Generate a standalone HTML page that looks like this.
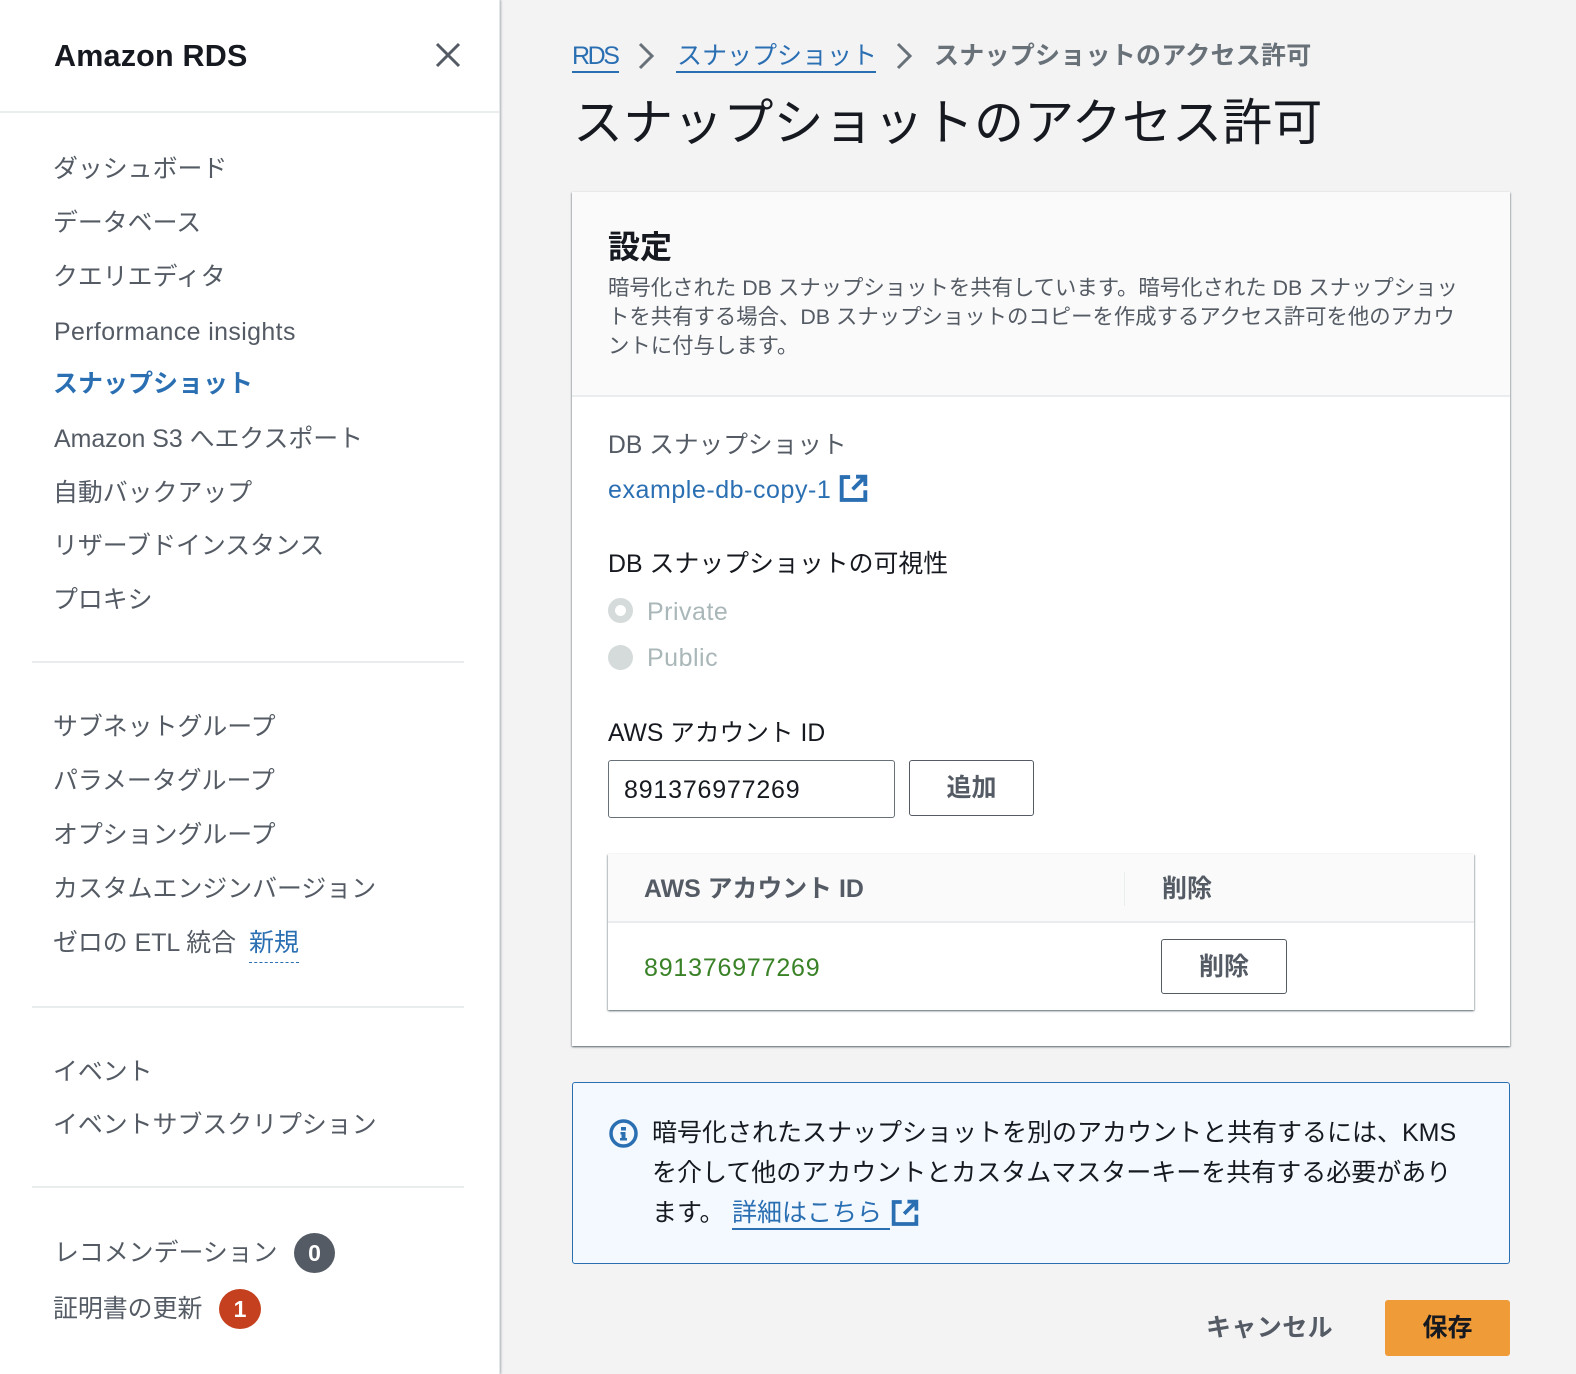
<!DOCTYPE html>
<html lang="ja"><head><meta charset="utf-8"><title>スナップショットのアクセス許可</title>
<style>
*{box-sizing:border-box}
html,body{margin:0;padding:0;width:1576px;height:1374px;overflow:hidden;background:#f3f3f4}
body{position:relative;font-family:"Liberation Sans","Noto Sans CJK JP",sans-serif;color:#16191f;font-size:25px}
.t{position:absolute;white-space:nowrap;height:40px;line-height:40px}
.n{color:#545b64;left:53px;font-size:24.9px}
.d{position:absolute;height:2px;background:#eaeded}
.b{font-weight:700}
.l{color:#2b6fb3}
.box{position:absolute}
svg{position:absolute;overflow:visible}
</style></head><body>
<div class="box" style="left:0;top:0;width:500px;height:1374px;background:#fff;border-right:1px solid #e4e7e7;box-shadow:1px 0 2px rgba(0,28,36,.3)"></div>
<div class="d" style="left:0;top:111px;width:499px"></div>
<div class="t b" style="left:54px;top:36px;font-size:30.500px;letter-spacing:.2px">Amazon RDS</div>
<svg style="left:435px;top:42px" width="26" height="26" viewBox="0 0 26 26"><path d="M2 2L24 24M24 2L2 24" stroke="#545b64" stroke-width="3" fill="none"/></svg>

<div class="t n" style="top:149px">ダッシュボード</div>
<div class="t n" style="top:203px">データベース</div>
<div class="t n" style="top:257px">クエリエディタ</div>
<div class="t n" style="top:312px;letter-spacing:.4px;left:54px">Performance insights</div>
<div class="t n b" style="top:364px;color:#2b6fb3;font-size:25px">スナップショット</div>
<div class="t n" style="top:419px;left:54px">Amazon S3 へエクスポート</div>
<div class="t n" style="top:473px">自動バックアップ</div>
<div class="t n" style="top:526px">リザーブドインスタンス</div>
<div class="t n" style="top:580px">プロキシ</div>
<div class="d" style="left:32px;top:661px;width:432px"></div>
<div class="t n" style="top:707px">サブネットグループ</div>
<div class="t n" style="top:761px">パラメータグループ</div>
<div class="t n" style="top:815px">オプショングループ</div>
<div class="t n" style="top:869px">カスタムエンジンバージョン</div>
<div class="t n" style="top:923px">ゼロの ETL 統合</div>
<div class="t l" style="left:249px;top:923px">新規</div>
<div class="box" style="left:249px;top:962px;width:50px;border-top:1px dashed #2b6fb3"></div>
<div class="d" style="left:32px;top:1006px;width:432px"></div>
<div class="t n" style="top:1052px">イベント</div>
<div class="t n" style="top:1105px">イベントサブスクリプション</div>
<div class="d" style="left:32px;top:1186px;width:432px"></div>
<div class="t n" style="top:1233px;left:54px">レコメンデーション</div>
<div class="t n" style="top:1289px">証明書の更新</div>
<div class="box b" style="left:294px;top:1233px;width:41px;height:40px;border-radius:50%;background:#545b64;color:#fff;text-align:center;line-height:40px;font-size:23px">0</div>
<div class="box b" style="left:219px;top:1289px;width:42px;height:40px;border-radius:50%;background:#c4401f;color:#fff;text-align:center;line-height:40px;font-size:23px">1</div>

<div class="t l" style="left:572px;top:36px;letter-spacing:-2.400px">RDS</div>
<div class="box" style="left:572px;top:71px;width:47px;height:2px;background:#2b6fb3"></div>
<svg style="left:637px;top:42px" width="20" height="28" viewBox="0 0 20 28"><path d="M3 2L15 14L3 26" stroke="#687078" stroke-width="3" fill="none"/></svg>
<div class="t l" style="left:677px;top:36px">スナップショット</div>
<div class="box" style="left:676px;top:71px;width:200px;height:2px;background:#2b6fb3"></div>
<svg style="left:895px;top:42px" width="20" height="28" viewBox="0 0 20 28"><path d="M3 2L15 14L3 26" stroke="#687078" stroke-width="3" fill="none"/></svg>
<div class="t b" style="left:934px;top:36px;color:#687078;letter-spacing:.25px">スナップショットのアクセス許可</div>
<div class="t" style="left:573px;top:93px;height:60px;line-height:60px;font-size:50px;letter-spacing:.13px">スナップショットのアクセス許可</div>

<div class="box" style="left:572px;top:192px;width:938px;height:854px;background:#fff;box-shadow:0 1px 2px rgba(0,28,36,.5),1px 1px 1px rgba(0,28,36,.12),-1px 1px 1px rgba(0,28,36,.12)"></div>
<div class="box" style="left:572px;top:192px;width:938px;height:205px;background:#fafafa;border-bottom:2px solid #eaeded"></div>
<div class="t b" style="left:608px;top:227px;font-size:32px">設定</div>
<div class="t" style="left:608px;top:268px;font-size:21.380px;color:#545b64">暗号化された DB スナップショットを共有しています。暗号化された DB スナップショッ</div>
<div class="t" style="left:608px;top:297px;font-size:21.380px;color:#545b64">トを共有する場合、DB スナップショットのコピーを作成するアクセス許可を他のアカウ</div>
<div class="t" style="left:608px;top:326px;font-size:21.380px;color:#545b64">ントに付与します。</div>

<div class="t" style="left:608px;top:426px;color:#545b64;font-size:24.700px">DB スナップショット</div>
<div class="t l" style="left:608px;top:470px;letter-spacing:.55px">example-db-copy-1</div>
<svg style="left:840px;top:475px" width="27" height="27" viewBox="0 0 16 16"><path d="M6 1.200H1v13.600h14V9M9.500 1h5.500v5.500M15 1L7.500 8.500" stroke="#2b6fb3" stroke-width="2.300" fill="none"/></svg>

<div class="t" style="left:608px;top:544px;font-size:24.900px">DB スナップショットの可視性</div>
<div class="box" style="left:608px;top:598px;width:25px;height:25px;border-radius:50%;border:7px solid #d5dbdb;background:#fff"></div>
<div class="t" style="left:647px;top:592px;color:#aab7b8;letter-spacing:.5px">Private</div>
<div class="box" style="left:608px;top:645px;width:25px;height:25px;border-radius:50%;background:#d5dbdb"></div>
<div class="t" style="left:647px;top:638px;color:#aab7b8;letter-spacing:.5px">Public</div>

<div class="t" style="left:608px;top:714px;font-size:24.700px">AWS アカウント ID</div>
<div class="box" style="left:608px;top:760px;width:287px;height:58px;background:#fff;border:1.500px solid #687078;border-radius:3px"></div>
<div class="t" style="left:624px;top:770px;letter-spacing:.8px">891376977269</div>
<div class="box" style="left:909px;top:760px;width:125px;height:56px;background:#fff;border:1.500px solid #545b64;border-radius:3px"></div>
<div class="t b" style="left:909px;top:768px;width:125px;text-align:center;color:#545b64">追加</div>

<div class="box" style="left:608px;top:854px;width:866px;height:156px;background:#fff;box-shadow:0 1px 2px rgba(0,28,36,.5),1px 1px 1px rgba(0,28,36,.12),-1px 1px 1px rgba(0,28,36,.12)"></div>
<div class="box" style="left:608px;top:854px;width:866px;height:69px;background:#fafafa;border-bottom:2px solid #eaeded"></div>
<div class="box" style="left:1124px;top:872px;width:1px;height:34px;background:#eaeded"></div>
<div class="t b" style="left:644px;top:869px;color:#545b64;font-size:24.900px">AWS アカウント ID</div>
<div class="t b" style="left:1162px;top:869px;color:#545b64">削除</div>
<div class="t" style="left:644px;top:948px;color:#3a8227;letter-spacing:.8px">891376977269</div>
<div class="box" style="left:1161px;top:939px;width:126px;height:55px;background:#fff;border:1.500px solid #545b64;border-radius:3px"></div>
<div class="t b" style="left:1161px;top:947px;width:126px;text-align:center;color:#545b64">削除</div>

<div class="box" style="left:572px;top:1082px;width:938px;height:182px;background:#f3f9fe;border:1.500px solid #2b6fb3;border-radius:3px"></div>
<svg style="left:609px;top:1119px" width="29" height="29" viewBox="0 0 29 29"><circle cx="14.500" cy="14.500" r="12.500" stroke="#2b6fb3" stroke-width="3.500" fill="none"/><path d="M12 8h5v3.500h-5zM11.500 13h5v6h1.500v2.500h-7V19h1.500v-3.500h-1z" fill="#2b6fb3"/></svg>
<div class="t" style="left:652px;top:1113px">暗号化されたスナップショットを別のアカウントと共有するには、KMS</div>
<div class="t" style="left:652px;top:1153px">を介して他のアカウントとカスタムマスターキーを共有する必要があり</div>
<div class="t" style="left:652px;top:1193px">ます。</div>
<div class="t l" style="left:732px;top:1193px">詳細はこちら</div>
<div class="box" style="left:732px;top:1228px;width:158px;height:2px;background:#2b6fb3"></div>
<svg style="left:892px;top:1200px" width="26" height="26" viewBox="0 0 16 16"><path d="M6 1.200H1v13.600h14V9M9.500 1h5.500v5.500M15 1L7.500 8.500" stroke="#2b6fb3" stroke-width="2.300" fill="none"/></svg>

<div class="t b" style="left:1206px;top:1308px;color:#545b64;letter-spacing:.4px">キャンセル</div>
<div class="box" style="left:1385px;top:1300px;width:125px;height:56px;background:#ef9b38;border-radius:3px"></div>
<div class="t b" style="left:1385px;top:1308px;width:125px;text-align:center">保存</div>
</body></html>
